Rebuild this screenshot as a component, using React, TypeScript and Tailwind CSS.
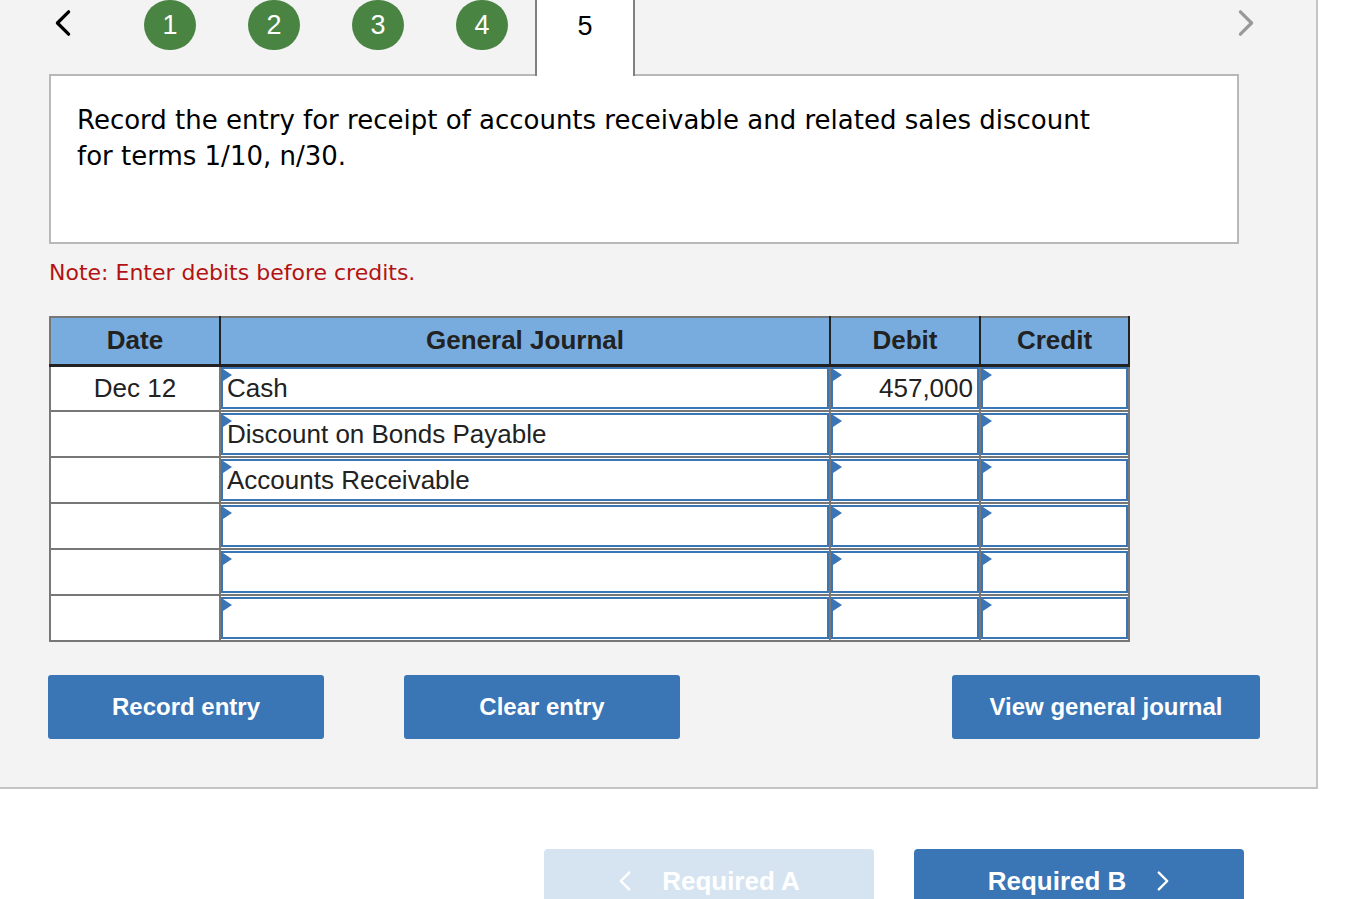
import React from "react";

const rows = [
  { date: "Dec 12", account: "Cash", debit: "457,000", credit: "" },
  { date: "", account: "Discount on Bonds Payable", debit: "", credit: "" },
  { date: "", account: "Accounts Receivable", debit: "", credit: "" },
  { date: "", account: "", debit: "", credit: "" },
  { date: "", account: "", debit: "", credit: "" },
  { date: "", account: "", debit: "", credit: "" },
];

function Chevron({ dir, className }: { dir: "left" | "right"; className?: string }) {
  return (
    <svg viewBox="0 0 20 30" className={className} fill="none" stroke="currentColor" strokeWidth="3.5" strokeLinecap="round" strokeLinejoin="round">
      {dir === "left" ? <path d="M16 3 L4 15 L16 27" /> : <path d="M4 3 L16 15 L4 27" />}
    </svg>
  );
}

// blue marker in the corner of each editable cell
function Marker() {
  return <span className="absolute left-0 top-0 h-0 w-0 border-y-[6px] border-l-[9px] border-y-transparent border-l-[#3a75b5]" />;
}

function InputCell({ value, align = "left" }: { value: string; align?: "left" | "right" }) {
  return (
    <td className="border-2 border-[#777] p-0 bg-white">
      <div className={`relative h-[42px] border-2 border-[#3a75b5] flex items-center px-[4px] ${align === "right" ? "justify-end" : ""}`}>
        <Marker />
        <span>{value}</span>
      </div>
    </td>
  );
}

export default function App() {
  return (
    <div className="h-[899px] w-[1345px] overflow-hidden bg-white" style={{ fontFamily: '"Liberation Sans", Arial, sans-serif' }}>
      <div className="h-[789px] w-[1318px] bg-[#f3f3f3] border-r-2 border-b-2 border-[#c4c4c4]">
        {/* step tabs */}
        <div className="flex h-[74px] items-start">
          <Chevron dir="left" className="ml-[53px] mt-[9px] h-[28px] w-[20px] text-black" />
          <div className="ml-[71px] flex gap-[52px]">
            {[1, 2, 3, 4].map((n) => (
              <div key={n} className="flex h-[50px] w-[52px] items-center justify-center rounded-full bg-[#4a8443] text-[27px] text-white">
                {n}
              </div>
            ))}
          </div>
          <div className="relative z-10 ml-[27px] flex h-[76px] w-[100px] justify-center border-x-2 border-[#808080] bg-white pt-[6px] text-[27px] text-black">
            5
          </div>
          <Chevron dir="right" className="ml-[601px] mt-[9px] h-[28px] w-[20px] text-[#999]" />
        </div>

        {/* question */}
        <div
          className="ml-[49px] h-[170px] w-[1190px] border-2 border-[#b8b8b8] bg-white pl-[26px] pt-[26px] text-[26px] leading-[36px] text-black"
          style={{ fontFamily: '"DejaVu Sans", Verdana, sans-serif' }}
        >
          Record the entry for receipt of accounts receivable and related sales discount
          <br />
          for terms 1/10, n/30.
        </div>

        <p className="ml-[49px] mt-[16px] text-[22px] leading-[26px] text-[#b31212]" style={{ fontFamily: '"DejaVu Sans", Verdana, sans-serif' }}>
          Note: Enter debits before credits.
        </p>

        {/* journal table */}
        <table className="ml-[49px] mt-[30px] w-[1079px] table-fixed border-collapse text-[26px] text-[#222]">
          <colgroup>
            <col className="w-[170px]" />
            <col className="w-[610px]" />
            <col className="w-[150px]" />
            <col className="w-[149px]" />
          </colgroup>
          <thead>
            <tr className="h-[48px] bg-[#78acdf] font-bold">
              <th className="border-2 border-b-[3px] border-[#777] border-r-[#222] border-b-[#222]">Date</th>
              <th className="border-2 border-b-[3px] border-[#777] border-x-[#222] border-b-[#222]">General Journal</th>
              <th className="border-2 border-b-[3px] border-[#777] border-x-[#222] border-b-[#222]">Debit</th>
              <th className="border-2 border-b-[3px] border-[#777] border-l-[#222] border-r-[#222] border-b-[#222]">Credit</th>
            </tr>
          </thead>
          <tbody>
            {rows.map((r, i) => (
              <tr key={i} className="h-[46px]">
                <td className="border-2 border-[#777] bg-white text-center">{r.date}</td>
                <InputCell value={r.account} />
                <InputCell value={r.debit} align="right" />
                <InputCell value={r.credit} align="right" />
              </tr>
            ))}
          </tbody>
        </table>

        {/* actions */}
        <div className="mt-[33px] flex pl-[48px] text-[24px] font-bold text-white">
          <button className="h-[64px] w-[276px] rounded-[3px] bg-[#3a75b5]">Record entry</button>
          <button className="ml-[80px] h-[64px] w-[276px] rounded-[3px] bg-[#3a75b5]">Clear entry</button>
          <button className="ml-[272px] h-[64px] w-[308px] rounded-[3px] bg-[#3a75b5]">View general journal</button>
        </div>
      </div>

      {/* part navigation */}
      <div className="mt-[60px] flex pl-[544px] text-[26px] font-bold text-white">
        <button className="flex h-[64px] w-[330px] items-center justify-center gap-[30px] rounded-t-[4px] bg-[#d6e4f1]">
          <Chevron dir="left" className="h-[22px] w-[14px]" />
          <span>Required A</span>
        </button>
        <button className="ml-[40px] flex h-[64px] w-[330px] items-center justify-center gap-[30px] rounded-t-[4px] bg-[#3a75b5]">
          <span>Required B</span>
          <Chevron dir="right" className="h-[22px] w-[14px]" />
        </button>
      </div>
    </div>
  );
}
